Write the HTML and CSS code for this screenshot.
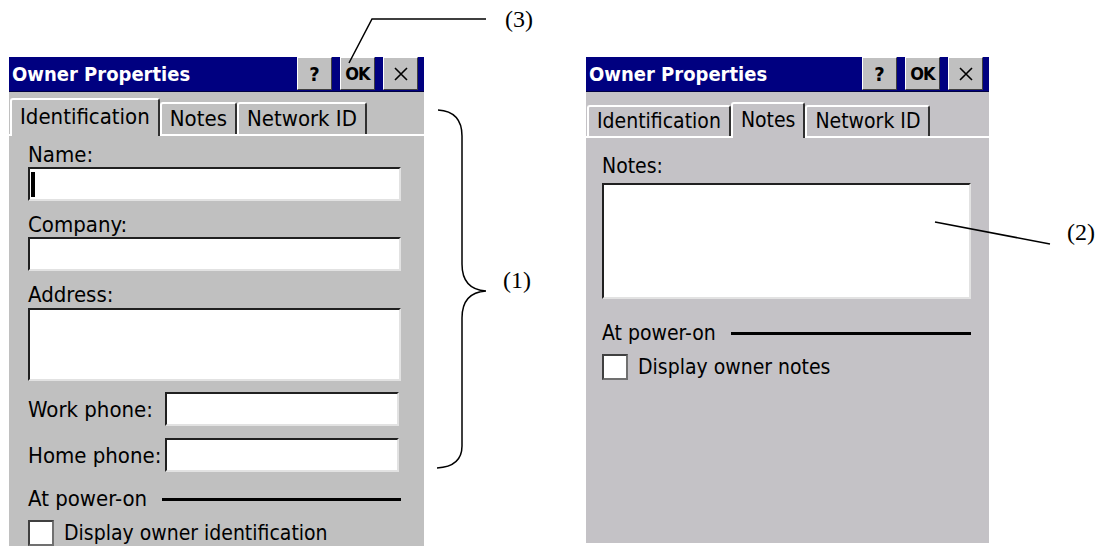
FILE: index.html
```html
<!DOCTYPE html>
<html>
<head>
  <title>Owner Properties</title>
  <link rel="stylesheet" href="styles.css">
</head>
<body>
<div class="page">

  <!-- Identification tab -->
  <div class="window window-left">
    <div class="titlebar">
      <span class="title">Owner Properties</span>
      <span class="tb-btn">?</span>
      <span class="tb-btn tb-ok">OK</span>
      <span class="tb-btn"><svg width="14" height="14" viewBox="0 0 14 14"><path d="M1 1L13 13M13 1L1 13" stroke="#000" stroke-width="1.6"/></svg></span>
    </div>
    <div class="tabs">
      <div class="tab active">Identification</div>
      <div class="tab">Notes</div>
      <div class="tab">Network ID</div>
    </div>
    <div class="panel panel-ident">
      <div class="lbl">Name:</div>
      <div class="box"><span class="caret"></span></div>
      <div class="lbl">Company:</div>
      <div class="box"></div>
      <div class="lbl">Address:</div>
      <div class="box box-address"></div>
      <div class="row"><span class="row-lbl">Work phone:</span><div class="box"></div></div>
      <div class="row"><span class="row-lbl">Home phone:</span><div class="box"></div></div>
      <div class="group"><span>At power-on</span><span class="rule"></span></div>
      <div class="check"><span class="checkbox"></span>Display owner identification</div>
    </div>
  </div>

  <!-- Notes tab -->
  <div class="window window-right">
    <div class="titlebar">
      <span class="title">Owner Properties</span>
      <span class="tb-btn">?</span>
      <span class="tb-btn tb-ok">OK</span>
      <span class="tb-btn"><svg width="14" height="14" viewBox="0 0 14 14"><path d="M1 1L13 13M13 1L1 13" stroke="#000" stroke-width="1.6"/></svg></span>
    </div>
    <div class="tabs">
      <div class="tab">Identification</div>
      <div class="tab active">Notes</div>
      <div class="tab">Network ID</div>
    </div>
    <div class="panel panel-notes">
      <div class="lbl">Notes:</div>
      <div class="box box-notes"></div>
      <div class="group"><span>At power-on</span><span class="rule"></span></div>
      <div class="check"><span class="checkbox"></span>Display owner notes</div>
    </div>
  </div>

  <!-- callouts drawn over the screenshots -->
  <svg class="callouts" width="1098" height="546" viewBox="0 0 1098 546">
    <g fill="none" stroke="#000" stroke-width="1.5">
      <path d="M349 63L372 19L486 19"/>
      <path d="M438 110C454 111 462 119 462 136L462 264C462 281 470 290 486 291C470 292 462 301 462 318L462 446C462 460 454 467 437 468"/>
      <path d="M935 222L1050 244"/>
    </g>
    <g class="callout-text">
      <text x="505" y="27">(3)</text>
      <text x="503" y="288">(1)</text>
      <text x="1067" y="240">(2)</text>
    </g>
  </svg>

</div>
</body>
</html>
```

FILE: styles.css
```css
body {
  margin: 0;
  background-color: #fff;
}

.page {
  position: relative;
  width: 1098px;
  height: 546px;
  overflow: hidden;
  box-sizing: border-box;
  padding: 57px 0 0 9px;
  display: flex;
  align-items: flex-start;
  gap: 162px;
  font-family: "DejaVu Sans Condensed", "DejaVu Sans", sans-serif;
  font-stretch: semi-condensed;
  font-size: 22px;
  color: #000;
}

/* Window frames */
.window {
  display: flex;
  flex-direction: column;
  background-color: #c0c0c0;
}

.window-left {
  width: 415px;
  height: 489px;
}

.window-right {
  width: 403px;
  height: 486px;
  font-size: 21px;
  background-color: #c4c2c6;
}

.titlebar {
  height: 34px;
  display: flex;
  align-items: flex-start;
  gap: 8px;
  padding-right: 6px;
  background-color: #000080;
  border-bottom: 1px solid #000040;
}

.title {
  flex: 1;
  padding: 5px 0 0 3px;
  color: #fff;
  font-size: 20px;
  font-weight: bold;
}

.tb-btn {
  width: 35px;
  height: 33px;
  box-sizing: border-box;
  display: flex;
  align-items: center;
  justify-content: center;
  background-color: #c0c0c0;
  border: 1px solid;
  border-color: #fff #404040 #404040 #fff;
  font-size: 20px;
  font-weight: bold;
}

.tb-ok {
  font-size: 18px;
  letter-spacing: -1px;
}

/* Tabs */
.tabs {
  height: 45px;
  display: flex;
  align-items: flex-end;
  padding-left: 1px;
  box-shadow: inset 0 -2px #fff;
}

.window-right .tabs {
  height: 46px;
}

.tab {
  height: 32px;
  margin-bottom: 2px;
  box-sizing: border-box;
  padding: 0 8px;
  line-height: 30px;
  border-top: 2px solid #fff;
  border-left: 2px solid #fff;
  border-right: 2px solid #303030;
  border-radius: 3px 3px 0 0;
}

.tab.active {
  height: 38px;
  margin-bottom: 0;
  line-height: 34px;
  background-color: #c0c0c0;
}

.window-right .tab {
  height: 31px;
  line-height: 28px;
}

.window-right .tab.active {
  height: 36px;
  line-height: 32px;
  background-color: #c4c2c6;
}

/* Panel contents */
.panel-ident {
  padding: 6px 23px 0 19px;
}

.panel-notes {
  padding: 16px 18px 0 16px;
}

.lbl {
  line-height: 25px;
}

.box {
  position: relative;
  height: 34px;
  box-sizing: border-box;
  background-color: #fff;
  border: 2px solid;
  border-color: #202020 #e2e2e2 #e2e2e2 #202020;
}

.box + .lbl {
  margin-top: 11px;
}

.caret {
  position: absolute;
  left: 1px;
  top: 3px;
  width: 4px;
  height: 25px;
  background-color: #000;
}

.box-address {
  height: 73px;
  margin-top: 1px;
}

.box-notes {
  height: 116px;
  margin-top: 4px;
}

.row {
  display: flex;
  align-items: center;
  margin-top: 11px;
  margin-right: 2px;
}

.row + .row {
  margin-top: 12px;
}

.row-lbl {
  width: 137px;
  flex-shrink: 0;
}

.row .box {
  flex: 1;
}

.group {
  display: flex;
  align-items: center;
  gap: 15px;
  line-height: 24px;
  margin-top: 15px;
}

.panel-notes .group {
  margin-top: 22px;
}

.rule {
  flex: 1;
  height: 3px;
  background-color: #000;
}

.check {
  display: flex;
  align-items: center;
  gap: 10px;
  margin-top: 9px;
  line-height: 26px;
  font-size: 21px;
}

.checkbox {
  width: 26px;
  height: 26px;
  box-sizing: border-box;
  background-color: #fff;
  border: 2px solid;
  border-color: #404040 #707070 #707070 #404040;
}

/* Callouts */
.callouts {
  position: absolute;
  left: 0;
  top: 0;
  pointer-events: none;
}

.callout-text {
  font-family: "Liberation Serif", serif;
  font-size: 24px;
}
```
